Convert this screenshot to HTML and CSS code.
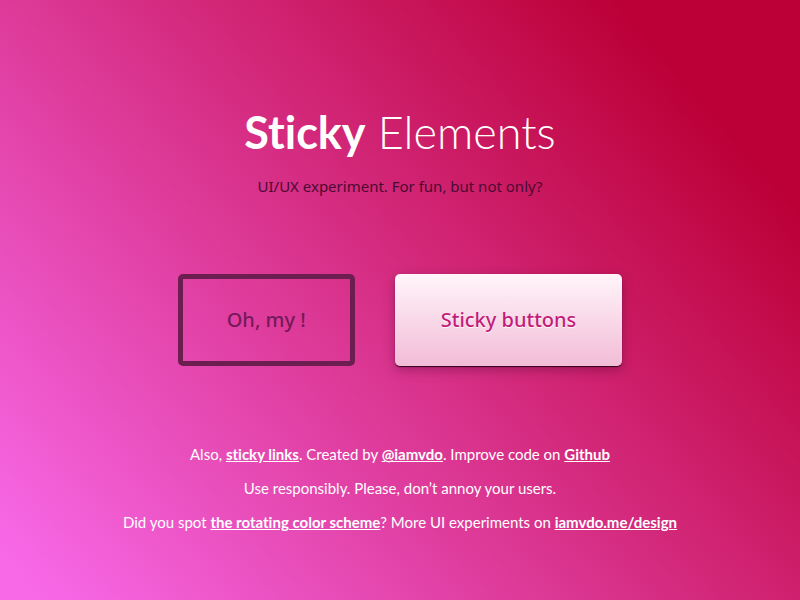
FILE: index.html
```html
<!DOCTYPE html>
<html lang="en">
<head>
<meta charset="utf-8">
<meta name="viewport" content="width=device-width, initial-scale=1">
<title>Sticky Elements</title>
<link rel="stylesheet" href="styles.css">
</head>
<body>
<main class="page">
  <header class="intro">
    <h1 class="title"><strong>Sticky</strong> Elements</h1>
    <p class="tagline">UI/UX experiment. For fun, but not only?</p>
  </header>
  <div class="buttons">
    <button class="button button-outline" type="button">Oh, my !</button>
    <button class="button button-solid" type="button">Sticky buttons</button>
  </div>
  <footer class="notes">
    <p>Also, <a href="#links">sticky links</a>. Created by <a href="#author">@iamvdo</a>. Improve code on <a href="#github">Github</a></p>
    <p>Use responsibly. Please, don’t annoy your users.</p>
    <p>Did you spot <a href="#colors">the rotating color scheme</a>? More UI experiments on <a href="#design">iamvdo.me/design</a></p>
  </footer>
</main>
</body>
</html>
```
FILE: styles.css
```css
* {
  box-sizing: border-box;
}

body {
  margin: 0;
  font-family: Lato, sans-serif;
  font-size: 15px;
  font-variant-ligatures: none;
  line-height: 24px;
  color: #fff;
}

.page {
  min-height: 100vh;
  padding: 50px 16px 16px;
  display: flex;
  flex-direction: column;
  align-items: center;
  justify-content: center;
  gap: 76px;
  text-align: center;
  background: linear-gradient(49deg, #f869e8 3%, #bc0037 86%);
}

.title {
  margin: 0 0 10px;
  font-size: 45px;
  line-height: 64px;
  font-weight: 300;
}

.title strong {
  font-weight: 700;
}

.tagline {
  margin: 0;
  font-family: "Noto Sans", "Open Sans", sans-serif;
  color: #4b0a32;
}

.buttons {
  display: flex;
  flex-wrap: wrap;
  justify-content: center;
  gap: 40px;
}

.button {
  min-height: 92px;
  padding: 0 46px;
  border: 0;
  border-radius: 5px;
  font: 500 20px/32px "Noto Sans", "Open Sans", sans-serif;
  cursor: pointer;
}

.button-outline {
  padding: 0 44px;
  border: 5px solid #6d1e50;
  background: transparent;
  color: #75195a;
}

.button-solid {
  background: linear-gradient(#fff5fa, #f2bcd7);
  color: #c11d79;
  text-shadow: 0 1px 1px #fff;
  box-shadow: 0 1px 1px #350020, 0 4px 12px rgba(60, 0, 40, 0.35);
}

.notes p {
  margin: 0 0 10px;
}

.notes p:last-child {
  margin-bottom: 0;
}

.notes a {
  color: inherit;
  font-weight: 700;
}
```
